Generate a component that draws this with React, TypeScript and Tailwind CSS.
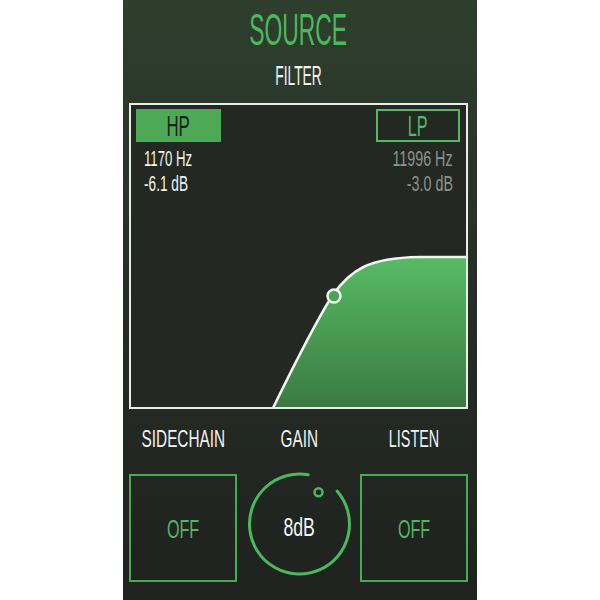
import React from "react";

const font = { fontFamily: '"Liberation Sans", Arial, sans-serif' };

function Knob({ value }: { value: string }) {
  return (
    <div className="relative w-[108px] h-[108px]">
      <svg width="108" height="108" viewBox="0 0 108 108" className="block">
        <path
          d="M92.2,19.2 A50,50 0 1 1 63.2,2.8"
          fill="none"
          stroke="#4cb85c"
          strokeWidth="3"
          strokeLinecap="round"
        />
        <circle cx="73.5" cy="20.3" r="4" fill="none" stroke="#4cb85c" strokeWidth="2.5" />
      </svg>
      <div className="absolute inset-0 flex items-center justify-center pt-[2px] pl-[1px]">
        <span className="inline-block scale-x-[0.68] text-[26px] leading-none text-[#f4f4f4]">
          {value}
        </span>
      </div>
    </div>
  );
}

function ToggleBox({ label }: { label: string }) {
  return (
    <div className="w-[108px] h-[108px] border-2 border-[#49a957] flex items-center justify-center pt-[2px]">
      <span className="inline-block scale-x-[0.62] text-[26px] leading-none text-[#55b662]">
        {label}
      </span>
    </div>
  );
}

export default function App() {
  return (
    <div className="w-[600px] h-[600px] bg-white flex justify-center" style={font}>
      <div className="w-[354px] h-[600px] bg-gradient-to-b from-[#2e3f2d] via-[#262d25] to-[#1f221f] flex flex-col pl-[6px] pr-[9px] pt-[8px]">
        <div className="flex justify-center leading-none">
          <span className="inline-block scale-x-[0.52] text-[44px] leading-none text-[#4cb85c]">
            SOURCE
          </span>
        </div>
        <div className="flex justify-center leading-none mt-[11px]">
          <span className="inline-block scale-x-[0.51] text-[27px] leading-none text-[#f2f2f2]">
            FILTER
          </span>
        </div>

        <div className="relative mt-[13px] h-[306px] border-2 border-[#e9ede8] bg-[#232823]">
          <svg
            className="absolute inset-0"
            width="335"
            height="302"
            viewBox="0 0 335 302"
          >
            <defs>
              <linearGradient id="fill" x1="0" y1="0" x2="0" y2="1">
                <stop offset="0" stopColor="#57bb63" />
                <stop offset="1" stopColor="#3b7a43" />
              </linearGradient>
            </defs>
            <path
              d="M142,303 C163,260 183,220 201,191 C220,164 238,153 288,152 L336,152 L336,303 Z"
              fill="url(#fill)"
            />
            <path
              d="M142,303 C163,260 183,220 201,191 C220,164 238,153 288,152 L336,152"
              fill="none"
              stroke="#f1f4f0"
              strokeWidth="2.5"
            />
            <circle cx="203" cy="191" r="6.5" fill="#4aa456" stroke="#f1f4f0" strokeWidth="2.5" />
          </svg>

          <div className="relative flex justify-between pl-[5px] pr-[6px] pt-[4px]">
            <div className="flex flex-col">
              <div className="w-[85px] h-[33px] bg-[#4ea957] flex items-center justify-center pt-[2px]">
                <span className="inline-block scale-x-[0.58] text-[29px] leading-none text-[#15231a]">
                  HP
                </span>
              </div>
              <div className="mt-[4px] pl-[8px] text-[22px] leading-[25px] text-[#f2f2f2]">
                <div>
                  <span className="inline-block origin-left scale-x-[0.6]">1170 Hz</span>
                </div>
                <div>
                  <span className="inline-block origin-left scale-x-[0.62]">-6.1 dB</span>
                </div>
              </div>
            </div>
            <div className="flex flex-col items-end">
              <div className="w-[84px] h-[33px] border-2 border-[#55b862] flex items-center justify-center pt-[2px]">
                <span className="inline-block scale-x-[0.56] text-[29px] leading-none text-[#55b862]">
                  LP
                </span>
              </div>
              <div className="mt-[4px] pr-[7px] text-[22px] leading-[25px] text-[#8d928c] text-right">
                <div>
                  <span className="inline-block origin-right scale-x-[0.65]">11996 Hz</span>
                </div>
                <div>
                  <span className="inline-block origin-right scale-x-[0.65]">-3.0 dB</span>
                </div>
              </div>
            </div>
          </div>
        </div>

        <div className="grid grid-cols-3 mt-[18px]">
          <div className="flex flex-col items-start">
            <div className="w-[108px] flex justify-center leading-none">
              <span className="inline-block scale-x-[0.64] text-[24px] leading-none text-[#f2f2f2]">
                SIDECHAIN
              </span>
            </div>
            <div className="mt-[23px]">
              <ToggleBox label="OFF" />
            </div>
          </div>
          <div className="flex flex-col items-center">
            <div className="flex justify-center leading-none pl-[2px]">
              <span className="inline-block scale-x-[0.64] text-[24px] leading-none text-[#f2f2f2]">
                GAIN
              </span>
            </div>
            <div className="mt-[21px]">
              <Knob value="8dB" />
            </div>
          </div>
          <div className="flex flex-col items-end">
            <div className="w-[108px] flex justify-center leading-none">
              <span className="inline-block scale-x-[0.6] text-[24px] leading-none text-[#f2f2f2]">
                LISTEN
              </span>
            </div>
            <div className="mt-[23px]">
              <ToggleBox label="OFF" />
            </div>
          </div>
        </div>
      </div>
    </div>
  );
}
